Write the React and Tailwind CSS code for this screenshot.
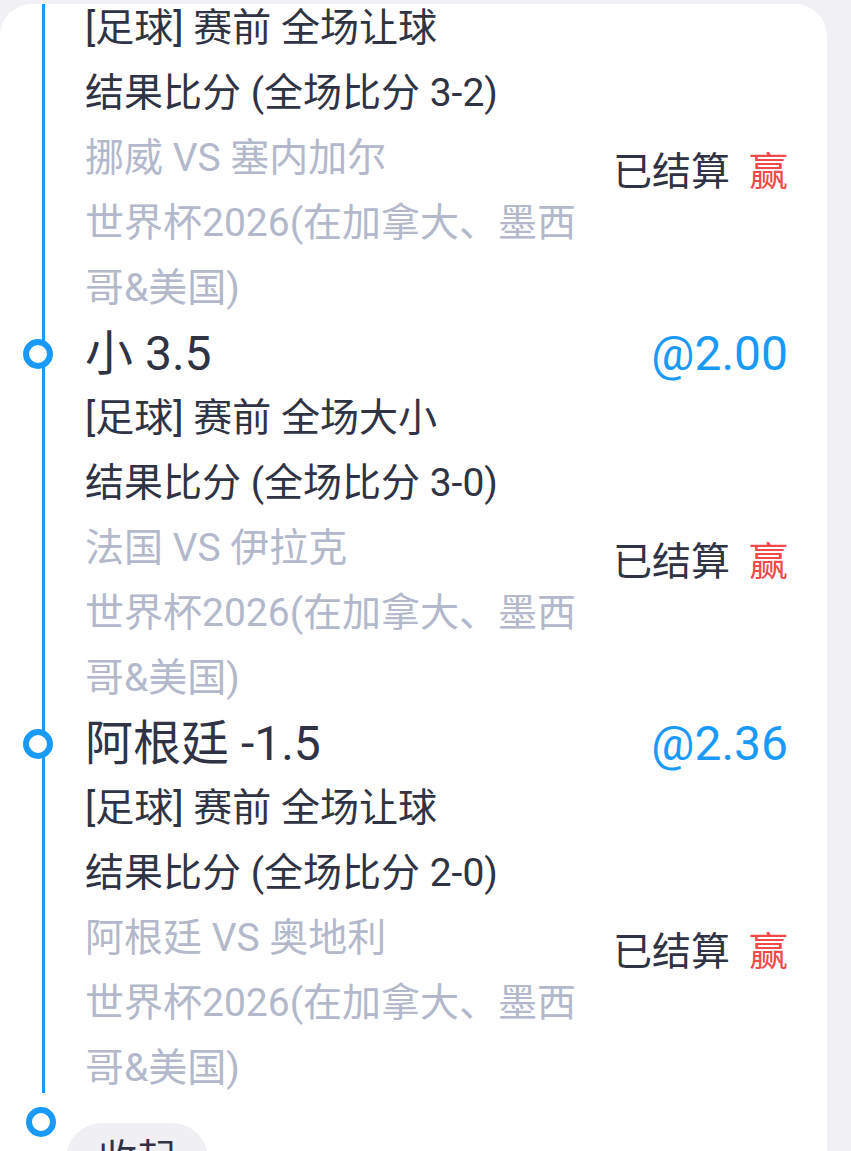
import React from "react";

const items = [
  {
    title: null,
    odds: null,
    market: "[足球] 赛前 全场让球",
    result: "结果比分 (全场比分 3-2)",
    match: "挪威 VS 塞内加尔",
    league: "世界杯2026(在加拿大、墨西哥&美国)",
  },
  {
    title: "小 3.5",
    odds: "@2.00",
    market: "[足球] 赛前 全场大小",
    result: "结果比分 (全场比分 3-0)",
    match: "法国 VS 伊拉克",
    league: "世界杯2026(在加拿大、墨西哥&美国)",
  },
  {
    title: "阿根廷 -1.5",
    odds: "@2.36",
    market: "[足球] 赛前 全场让球",
    result: "结果比分 (全场比分 2-0)",
    match: "阿根廷 VS 奥地利",
    league: "世界杯2026(在加拿大、墨西哥&美国)",
  },
];

const Dot = () => (
  <div className="relative z-10 h-[30px] w-[30px] shrink-0 rounded-full border-[6px] border-[#1a9af8] bg-white" />
);

const BetItem = ({ item }) => (
  <div>
    {item.title && (
      <div className="flex h-[65px] items-center">
        <div className="flex w-[85px] shrink-0 items-center pl-[23px]">
          <Dot />
        </div>
        <div className="flex flex-1 items-center justify-between pr-[39px]">
          <span className="text-[48px] leading-[65px] text-[#303344]">{item.title}</span>
          <span className="text-[48px] leading-[65px] text-[#1a9af8]">{item.odds}</span>
        </div>
      </div>
    )}
    <div className="flex">
      <div className="w-[85px] shrink-0" />
      <div className="w-[510px] shrink-0 text-[39px] leading-[65px]">
        <p className="text-[#303344]">{item.market}</p>
        <p className="text-[#303344]">{item.result}</p>
        <p className="text-[#b3b8cb]">{item.match}</p>
        <p className="text-[#b3b8cb]">{item.league}</p>
      </div>
      <div className="flex flex-1 items-center justify-end pr-[39px] pt-[28px] text-[39px] leading-[65px]">
        <span className="text-[#303344]">已结算</span>
        <span className="ml-[19px] text-[#f04a4a]">赢</span>
      </div>
    </div>
  </div>
);

export default function App() {
  return (
    <div
      className="h-[1151px] overflow-hidden bg-[#f0f0f5] pt-[4px]"
      style={{ fontFamily: "Roboto, 'Noto Sans CJK SC', sans-serif" }}
    >
      <div className="mr-[24px] h-[1300px] overflow-hidden rounded-t-[32px] bg-white">
        <div className="relative -mt-[8px]">
          <div className="absolute bottom-[8px] left-[42px] top-0 w-[3px] bg-[#1a9af8]" />
          {items.map((item, i) => (
            <BetItem key={i} item={item} />
          ))}
        </div>
        <div className="flex items-start">
          <div className="ml-[26px] mt-[6px]">
            <Dot />
          </div>
          <button className="ml-[10px] mt-[22px] flex h-[72px] items-center rounded-full bg-[#efeff4] px-[32px] text-[39px] text-[#303344]">
            收起
          </button>
        </div>
      </div>
    </div>
  );
}
